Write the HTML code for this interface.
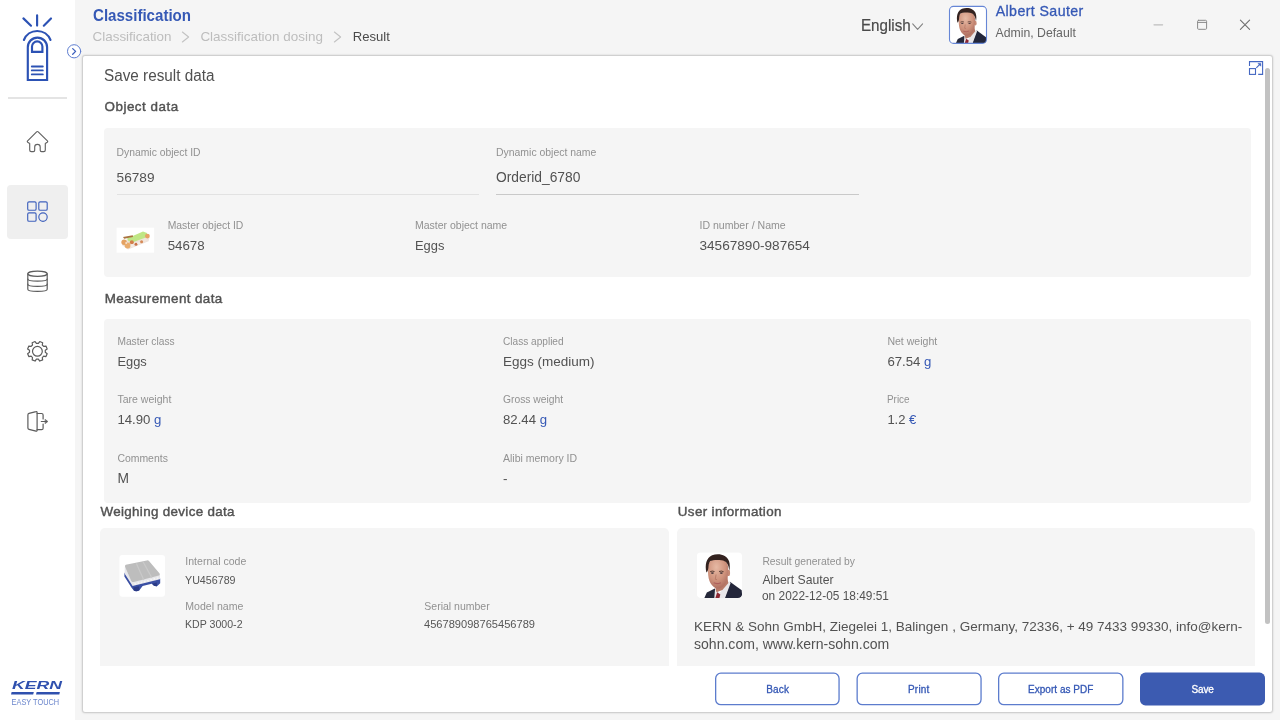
<!DOCTYPE html>
<html lang="en">
<head>
<meta charset="utf-8">
<title>Classification - Result</title>
<style>
*{box-sizing:border-box;margin:0;padding:0}
html,body{width:1280px;height:720px;overflow:hidden;background:#f5f5f5;font-family:"Liberation Sans",sans-serif;color:#4e4e4e}
#side{position:absolute;left:0;top:0;width:75px;height:720px;background:#fff}
#card{position:absolute;left:82px;top:55px;width:1191px;height:658px;background:#fff;border:1px solid #d0d0d0;border-radius:3px;box-shadow:0 0 2px rgba(0,0,0,.18)}
.t{position:absolute;white-space:nowrap;line-height:1}
.box{position:absolute;background:#f5f5f5;border-radius:4px}
.ln{position:absolute;height:1px}
svg{position:absolute;left:0;top:0;overflow:visible}
</style>
</head>
<body>
<div id="app" style="position:absolute;left:0;top:0;width:1280px;height:720px;will-change:transform">
<div id="side"></div>
<div style="position:absolute;left:8px;top:97px;width:59px;height:2px;background:#e4e4e4"></div>
<div style="position:absolute;left:7px;top:185px;width:61px;height:53.5px;background:#efefef;border-radius:4px"></div>
<svg width="80" height="720" viewBox="0 0 80 720" fill="none" stroke-linecap="round" stroke-linejoin="round">
 <!-- finger logo -->
 <g stroke="#2c52b4" stroke-width="2.15">
  <path d="M37.1 15.3V25.6M23.4 18.4L31 25.7M51 18.4L43.8 25.7"/>
  <path d="M23.9 40A14.3 14.3 0 0 1 50.5 40"/>
  <path d="M27.8 80V47.2A9.65 9.65 0 0 1 47.1 47.2V80Z" stroke-linejoin="miter"/>
  <path d="M32 51.8V46.6A5.2 5.2 0 0 1 42.4 46.6V51.8Z" stroke-linejoin="miter"/>
  <path d="M31.8 66.5H42.8M31.8 70.4H42.8M31.8 74.4H42.8" stroke-width="1.9"/>
 </g>
 <!-- home -->
 <path stroke="#626262" stroke-width="1.15" d="M36.6 131.9Q37.4 131.1 38.2 131.9L47.4 140.8Q48.1 141.6 47.2 142.2L45.3 143.4V150Q45.3 151.6 43.7 151.6H41.6Q40.2 151.6 40.2 150.2V147.1Q40.2 144.4 37.45 144.4Q34.7 144.4 34.7 147.1V150.2Q34.7 151.6 33.3 151.6H31.3Q29.7 151.6 29.7 150V143.4L27.7 142.2Q26.9 141.6 27.6 140.8Z"/>
 <!-- grid -->
 <g stroke="#4062bd" stroke-width="1.15">
  <rect x="27.7" y="201.8" width="8.4" height="8.4" rx="1.3"/>
  <rect x="38.8" y="201.8" width="8.4" height="8.4" rx="1.3"/>
  <rect x="27.7" y="212.9" width="8.4" height="8.4" rx="1.3"/>
  <circle cx="43" cy="217.1" r="4.2"/>
 </g>
 <!-- database -->
 <g stroke="#5c5c5c" stroke-width="1.2">
  <ellipse cx="37.5" cy="273.8" rx="9.7" ry="2.6"/>
  <path d="M27.8 273.8V289.3C27.8 292.1 47.2 292.1 47.2 289.3V273.8"/>
  <path d="M27.8 279.1C27.8 281.9 47.2 281.9 47.2 279.1M27.8 284.2C27.8 287 47.2 287 47.2 284.2"/>
 </g>
 <!-- gear -->
 <g stroke="#5c5c5c" stroke-width="1.2">
  <path d="M38.37 343.41 L39.75 341.53 L42.65 342.73 L42.29 345.04 L43.66 346.41 L45.97 346.05 L47.17 348.95 L45.29 350.33 L45.29 352.27 L47.17 353.65 L45.97 356.55 L43.66 356.19 L42.29 357.56 L42.65 359.87 L39.75 361.07 L38.37 359.19 L36.43 359.19 L35.05 361.07 L32.15 359.87 L32.51 357.56 L31.14 356.19 L28.83 356.55 L27.63 353.65 L29.51 352.27 L29.51 350.33 L27.63 348.95 L28.83 346.05 L31.14 346.41 L32.51 345.04 L32.15 342.73 L35.05 341.53 L36.43 343.41Z"/>
  <circle cx="37.4" cy="351.3" r="4.9"/>
 </g>
 <!-- logout -->
 <g stroke="#5c5c5c" stroke-width="1.2">
  <path d="M29 413.4L36 411.7Q37.1 411.4 37.1 412.6V430.3Q37.1 431.5 36 431.2L29 429.4Q27.9 429.1 27.9 427.9V414.9Q27.9 413.7 29 413.4Z"/>
  <path d="M37.1 413.5H41.6Q43.1 413.5 43.1 415V419M43.1 424V428.2Q43.1 429.7 41.6 429.7H37.1"/>
  <path d="M41.3 421.5H46"/>
  <path d="M45.4 419.5L47.9 421.5L45.4 423.5Z" fill="#5c5c5c" stroke-width=".6"/>
 </g>
 <!-- KERN logo -->
 <g stroke="none">
  <text x="12" y="689.4" font-family="Liberation Sans, sans-serif" font-weight="bold" font-style="italic" font-size="11.8" fill="#2f50ae" textLength="50" lengthAdjust="spacingAndGlyphs">KERN</text>
  <path d="M11.6 692H33.8L33.2 694.6H11z" fill="#2f50ae"/>
  <path d="M36.6 692H59.9L59.3 694.6H36z" fill="#2f50ae"/>
  <text x="11.6" y="705" font-family="Liberation Sans, sans-serif" font-size="8.8" fill="#6a85cc" textLength="47.5" lengthAdjust="spacingAndGlyphs">EASY TOUCH</text>
 </g>
</svg>
<div id="card"></div>
<svg width="1280" height="720" viewBox="0 0 1280 720" fill="none" stroke-linecap="round" stroke-linejoin="round">
 <!-- sidebar toggle -->
 <circle cx="74.1" cy="51.3" r="6.6" fill="#fff" stroke="#5d7dd0" stroke-width="1"/>
 <path d="M72.7 48.6L75.6 51.4L72.7 54.2" stroke="#3d60bd" stroke-width="1.3"/>
 <!-- breadcrumb chevrons -->
 <path d="M182.4 32L188.6 37L182.4 42M334.4 32L340.6 37L334.4 42" stroke="#c2c2c2" stroke-width="1.1"/>
 <!-- language chevron -->
 <path d="M912.7 23.9L917.6 29.4L922.6 23.9" stroke="#808080" stroke-width="1.05"/>
 <!-- window controls -->
 <path d="M1154 24.8H1162.6" stroke="#bdbdbd" stroke-width="1.2"/>
 <rect x="1197.6" y="20.3" width="9" height="9" rx="1" stroke="#8a8a8a" stroke-width="1"/>
 <path d="M1197.6 22.4H1206.6" stroke="#8a8a8a" stroke-width="1"/>
 <path d="M1240.4 20.2L1249.6 29.4M1249.6 20.2L1240.4 29.4" stroke="#6e6e6e" stroke-width="1.1"/>
 <!-- expand icon -->
 <g stroke="#4467c2" stroke-width="1.1" stroke-linecap="butt" stroke-linejoin="miter">
  <path d="M1249.5 66V61.6H1262.6V74.4H1258.2"/>
  <rect x="1249.5" y="68.6" width="6" height="5.8"/>
  <path d="M1256.3 67.8L1260.3 63.8"/>
  <path d="M1258 63.4H1260.8V66.2Z" fill="#4467c2" stroke-width=".6"/>
 </g>
</svg>
<!-- scrollbar -->
<div style="position:absolute;left:1265px;top:68px;width:5px;height:555.6px;background:#c2c2c2;border-radius:3px"></div>
<div class="box" style="left:104px;top:128px;width:1147px;height:149px"></div>
<div class="box" style="left:104px;top:319px;width:1147px;height:184px"></div>
<div class="box" style="left:100px;top:528px;width:569px;height:138px;border-radius:5px 5px 0 0"></div>
<div class="box" style="left:677px;top:528px;width:578px;height:138px;border-radius:5px 5px 0 0"></div>
<div class="ln" style="left:116.5px;top:194px;width:362px;background:#e2e2e2"></div>
<div class="ln" style="left:496px;top:194px;width:362.5px;background:#c9c9c9"></div>
<svg width="1280" height="720" viewBox="0 0 1280 720">
 <defs>
 <radialGradient id="sk" cx=".42" cy=".28" r=".8"><stop offset="0" stop-color="#e6b9a4"/><stop offset=".55" stop-color="#cf937d"/><stop offset="1" stop-color="#a5655a"/></radialGradient>
<symbol id="face" viewBox="0 0 46 46">
 <rect width="46" height="46" fill="#fff"/>
 <path d="M7.8 46L10.3 40.6L18.4 36.4L24 46Z" fill="#25283a"/>
 <path d="M28.2 46L33.6 29.6L45.4 38.2L46 46Z" fill="#23263a"/>
 <path d="M17.8 46L18.6 36.6L23 41L33.2 29L34.2 31.2L28.6 46Z" fill="#e9e7ea"/>
 <path d="M18.2 33L20 40.2L26 38L32 31L30.6 24Z" fill="#b87a68"/>
 <path d="M18.9 46L20.7 40.2L23.9 42.5L23 46Z" fill="#8c2732"/>
 <ellipse cx="32.2" cy="20.8" rx="1.5" ry="3.1" fill="#c68a76"/>
 <path d="M11.3 17C11 11 13 6.6 21.5 6.6C29.5 6.6 32 11 31.8 17C31.8 21 31.6 25 30.4 28.5C28.8 33 25 36.6 21.6 36.6C18.2 36.6 14.4 33 12.8 28.5C11.8 25.5 11.4 21 11.3 17Z" fill="url(#sk)"/>
 <path d="M9.9 20.4C8.2 13 9.6 5.6 15.6 3C22 .4 30.6 2.4 32.7 9C33.7 12.4 33.5 16 32.9 18.6C32.5 15 31.7 12.4 30.2 10.6C29 9.1 27.6 8.4 25 8C21 7.4 16 7.6 13.7 8.9C12.3 10.6 12.1 13 11.9 15.4C11.7 17.6 11.1 19.6 9.9 20.4Z" fill="#33221f"/>
 <path d="M13.6 19.6Q15.6 18.4 18 19.4M22.6 19.4Q25 18.4 27.2 19.6" stroke="#4a312b" stroke-width=".9" fill="none"/>
 <ellipse cx="15.9" cy="21" rx="1.6" ry=".8" fill="#4b3a3c"/>
 <ellipse cx="24.9" cy="21" rx="1.6" ry=".8" fill="#4b3a3c"/>
 <path d="M17.2 30.8Q20.6 32.4 24.4 30.6" stroke="#ad5f5c" stroke-width="1.1" fill="none"/>
 <path d="M19.6 22.4L18.8 27.2L20.6 27.6" stroke="#b67966" stroke-width=".9" fill="none"/>
</symbol>
 <clipPath id="cpA"><rect x="949.5" y="6.4" width="37" height="37" rx="4"/></clipPath>
 <clipPath id="cpB"><rect x="696.6" y="552.2" width="45.7" height="45.8" rx="4.5"/></clipPath>
 </defs>
 <!-- avatar header -->
 <g clip-path="url(#cpA)"><use href="#face" x="949.5" y="6.4" width="37" height="37"/></g>
 <rect x="949.5" y="6.4" width="37" height="37" rx="4" fill="none" stroke="#6686d6" stroke-width="1.1"/>
 <!-- user photo -->
 <g clip-path="url(#cpB)"><use href="#face" x="696.6" y="552.2" width="45.7" height="45.8"/></g>
 <!-- egg carton -->
 <g transform="translate(116.6 227.7)">
  <rect width="37.5" height="25" fill="#fff"/>
  <path d="M5 13.6L28.6 5.6L33 9.4L32 13.6L11.4 21.8L5.6 17.6Z" fill="#efe3da"/>
  <path d="M10.4 10.8L26.4 3.7L30.4 5.4L30.4 9.4L17 14.4L12 13.6Z" fill="#bfe685"/>
  <path d="M6.4 9.2L16.2 7.6L16.4 9.2L7.6 11Z" fill="#a9733f"/>
  <circle cx="7.5" cy="14.6" r="2.7" fill="#e4a262"/>
  <circle cx="11" cy="17.8" r="2.9" fill="#e9ac6c"/>
  <circle cx="15.2" cy="14.6" r="2" fill="#d27f4a"/>
  <circle cx="15.6" cy="18" r="1.6" fill="#f4ece6"/>
  <circle cx="19.4" cy="16.6" r="1.5" fill="#c9724a"/>
  <circle cx="22" cy="15.4" r="1.5" fill="#f4ece6"/>
  <circle cx="25" cy="14" r="1.5" fill="#d68a58"/>
  <circle cx="28" cy="12.6" r="1.5" fill="#f2e6dc"/>
  <circle cx="30.8" cy="8.4" r="2.4" fill="#e6a266"/>
  <circle cx="9.6" cy="15.2" r="1" fill="#f7e1cc"/>
 </g>
 <!-- scale -->
 <g transform="translate(119.4 555)">
  <rect width="45.6" height="41.7" rx="3" fill="#fff"/>
  <path d="M5 17.4L13 29L40.8 23.4V28.2L37.6 31.2Q35 31.8 32.4 28.8L23.2 31L20 35.2Q17 37.2 14.4 35.6L12 32.6L5 21.6Z" fill="#3a4fa3"/>
  <path d="M14 32.4L19.6 31.2L20 35.2Q17 37.2 14.4 35.6ZM32.6 28.8L37.4 27.6L37.6 31.2Q35 31.8 32.6 28.8Z" fill="#2b3b86"/>
  <path d="M5.4 11.6L12.6 26.8L40.6 19.8V24.2L13.2 31L5.2 18.6Z" fill="#e7e7ea"/>
  <path d="M6.4 9.8Q5 10.6 5.8 12.2L12 26.2Q12.8 27.4 14.4 27L39.6 20.4Q41 19.8 40.2 18.4L29.6 6Q28.8 5 27.4 5.4Z" fill="#bdbdbd"/>
  <path d="M17 8.4L24.4 25M23.6 6.6L32.4 22.8" stroke="#c9c9c9" stroke-width="1.2"/>
  <path d="M15 29.2L39.6 22.8" stroke="#f6f6f6" stroke-width="1.5" stroke-dasharray="1.6 1.7"/>
 </g>
</svg>
<svg width="1280" height="720" viewBox="0 0 1280 720" fill="none">
 <rect x="715.65" y="673.2" width="123.4" height="31.5" rx="5.2" fill="#fff" stroke="#5c7ccd" stroke-width="1.3"/>
 <rect x="857.15" y="673.2" width="123.9" height="31.5" rx="5.2" fill="#fff" stroke="#5c7ccd" stroke-width="1.3"/>
 <rect x="998.65" y="673.2" width="124.2" height="31.5" rx="5.2" fill="#fff" stroke="#5c7ccd" stroke-width="1.3"/>
 <rect x="1140" y="672.6" width="125" height="32.8" rx="5.5" fill="#3c5bb1"/>
</svg>
<div class="t" style="left:92.60px;top:8.46px;font-size:16.0px;color:#3558b5;font-weight:bold;transform:scaleX(0.942);transform-origin:0 0;">Classification</div>
<div class="t" style="left:92.60px;top:29.66px;font-size:13.4px;color:#bdbdbd;">Classification</div>
<div class="t" style="left:200.40px;top:29.61px;font-size:13.45px;color:#bdbdbd;">Classification dosing</div>
<div class="t" style="left:352.80px;top:29.91px;font-size:13.1px;color:#4a4a4a;">Result</div>
<div class="t" style="left:861.00px;top:17.54px;font-size:15.9px;color:#4a4a4a;transform:scaleX(0.955);transform-origin:0 0;-webkit-text-stroke:.2px #4a4a4a;">English</div>
<div class="t" style="left:995.70px;top:3.98px;font-size:14.2px;color:#3558b5;letter-spacing:.4px;-webkit-text-stroke:.3px #3558b5;">Albert Sauter</div>
<div class="t" style="left:995.50px;top:26.63px;font-size:12.25px;color:#666;">Admin, Default</div>
<div class="t" style="left:104.30px;top:67.63px;font-size:15.8px;color:#505050;transform:scaleX(0.968);transform-origin:0 0;">Save result data</div>
<div class="t" style="left:104.50px;top:99.66px;font-size:13.4px;color:#525252;letter-spacing:0.52px;-webkit-text-stroke:.42px #525252;">Object data</div>
<div class="t" style="left:104.70px;top:291.66px;font-size:13.4px;color:#525252;letter-spacing:0.39px;-webkit-text-stroke:.42px #525252;">Measurement data</div>
<div class="t" style="left:100.50px;top:504.66px;font-size:13.4px;color:#525252;letter-spacing:0.33px;-webkit-text-stroke:.42px #525252;">Weighing device data</div>
<div class="t" style="left:677.80px;top:504.66px;font-size:13.4px;color:#525252;letter-spacing:0.36px;-webkit-text-stroke:.42px #525252;">User information</div>
<div class="t" style="left:116.60px;top:148.24px;font-size:10.35px;color:#919191;">Dynamic object ID</div>
<div class="t" style="left:116.60px;top:171.45px;font-size:13.65px;color:#525252;">56789</div>
<div class="t" style="left:496.00px;top:148.15px;font-size:10.45px;color:#919191;">Dynamic object name</div>
<div class="t" style="left:496.00px;top:171.32px;font-size:13.8px;color:#525252;">Orderid_6780</div>
<div class="t" style="left:167.70px;top:221.20px;font-size:10.4px;color:#919191;">Master object ID</div>
<div class="t" style="left:167.70px;top:238.74px;font-size:13.3px;color:#525252;">54678</div>
<div class="t" style="left:415.00px;top:220.11px;font-size:10.5px;color:#919191;">Master object name</div>
<div class="t" style="left:415.00px;top:240.08px;font-size:12.9px;color:#525252;">Eggs</div>
<div class="t" style="left:699.50px;top:220.07px;font-size:10.55px;color:#919191;">ID number / Name</div>
<div class="t" style="left:699.50px;top:239.49px;font-size:13.6px;color:#525252;">34567890-987654</div>
<div class="t" style="left:117.40px;top:337.37px;font-size:10.2px;color:#919191;">Master class</div>
<div class="t" style="left:117.40px;top:356.08px;font-size:12.9px;color:#525252;">Eggs</div>
<div class="t" style="left:503.00px;top:337.45px;font-size:10.1px;color:#919191;">Class applied</div>
<div class="t" style="left:503.00px;top:354.57px;font-size:13.5px;color:#525252;">Eggs (medium)</div>
<div class="t" style="left:887.40px;top:336.07px;font-size:10.55px;color:#919191;">Net weight</div>
<div class="t" style="left:887.40px;top:354.83px;font-size:13.2px;color:#525252;">67.54 <span style="color:#3558b5">g</span></div>
<div class="t" style="left:117.40px;top:394.07px;font-size:10.55px;color:#919191;">Tare weight</div>
<div class="t" style="left:117.40px;top:412.83px;font-size:13.2px;color:#525252;">14.90 <span style="color:#3558b5">g</span></div>
<div class="t" style="left:503.00px;top:395.28px;font-size:10.3px;color:#919191;">Gross weight</div>
<div class="t" style="left:503.00px;top:412.83px;font-size:13.2px;color:#525252;">82.44 <span style="color:#3558b5">g</span></div>
<div class="t" style="left:887.40px;top:394.11px;font-size:10.5px;color:#919191;transform:scaleX(0.943);transform-origin:0 0;">Price</div>
<div class="t" style="left:887.40px;top:413.00px;font-size:13.0px;color:#525252;">1.2 <span style="color:#3558b5">&euro;</span></div>
<div class="t" style="left:117.40px;top:454.15px;font-size:10.45px;color:#919191;">Comments</div>
<div class="t" style="left:117.40px;top:472.32px;font-size:13.8px;color:#525252;">M</div>
<div class="t" style="left:503.00px;top:453.11px;font-size:10.5px;color:#919191;">Alibi memory ID</div>
<div class="t" style="left:503.00px;top:471.57px;font-size:13.5px;color:#525252;">-</div>
<div class="t" style="left:185.30px;top:556.07px;font-size:10.55px;color:#919191;">Internal code</div>
<div class="t" style="left:185.30px;top:575.01px;font-size:11.8px;color:#565656;transform:scaleX(0.907);transform-origin:0 0;">YU456789</div>
<div class="t" style="left:185.30px;top:601.07px;font-size:10.55px;color:#919191;">Model name</div>
<div class="t" style="left:185.30px;top:619.01px;font-size:11.8px;color:#565656;transform:scaleX(0.898);transform-origin:0 0;">KDP 3000-2</div>
<div class="t" style="left:424.30px;top:601.11px;font-size:10.5px;color:#919191;">Serial number</div>
<div class="t" style="left:424.30px;top:619.01px;font-size:11.8px;color:#565656;transform:scaleX(0.94);transform-origin:0 0;">456789098765456789</div>
<div class="t" style="left:762.40px;top:557.24px;font-size:10.35px;color:#919191;">Result generated by</div>
<div class="t" style="left:762.40px;top:573.67px;font-size:12.2px;color:#525252;">Albert Sauter</div>
<div class="t" style="left:762.40px;top:589.67px;font-size:12.2px;color:#525252;transform:scaleX(0.976);transform-origin:0 0;">on 2022-12-05 18:49:51</div>
<div class="t" style="left:694.00px;top:619.57px;font-size:13.5px;color:#525252;">KERN &amp; Sohn GmbH, Ziegelei 1, Balingen , Germany, 72336, + 49 7433 99330, info@kern-</div>
<div class="t" style="left:694.00px;top:637.11px;font-size:14.05px;color:#525252;">sohn.com, www.kern-sohn.com</div>
<div class="t" style="left:766.20px;top:684.53px;font-size:10px;color:#3558b5;letter-spacing:.2px;-webkit-text-stroke:.3px #3558b5;">Back</div>
<div class="t" style="left:908.00px;top:684.53px;font-size:10px;color:#3558b5;letter-spacing:.2px;-webkit-text-stroke:.3px #3558b5;">Print</div>
<div class="t" style="left:1028.00px;top:684.53px;font-size:10px;color:#3558b5;letter-spacing:.03px;-webkit-text-stroke:.3px #3558b5;">Export as PDF</div>
<div class="t" style="left:1191.60px;top:684.53px;font-size:10px;color:#fff;letter-spacing:-.2px;-webkit-text-stroke:.3px #fff;">Save</div>
</div>
</body>
</html>
